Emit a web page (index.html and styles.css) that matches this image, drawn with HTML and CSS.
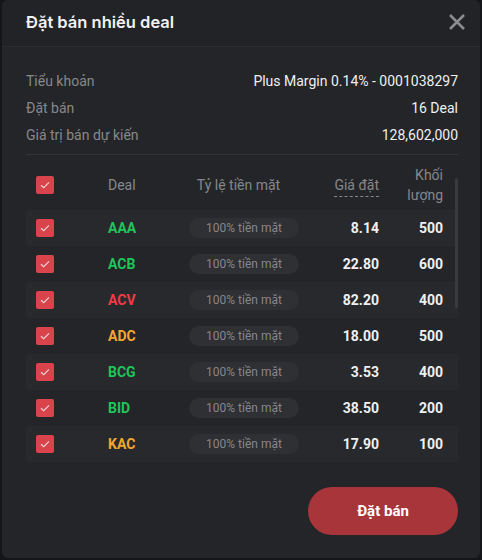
FILE: index.html
```html
<!DOCTYPE html>
<html lang="vi">
<head>
<meta charset="utf-8">
<link rel="stylesheet" href="styles.css">
</head>
<body>
<div class="modal">
  <div class="modal-header">
    <div class="title">Đặt bán nhiều deal</div>
    <svg class="close" width="18" height="18" viewBox="0 0 18 18"><path d="M2 2L16 16M16 2L2 16" stroke="#8b8c8f" stroke-width="2.6" stroke-linecap="butt"/></svg>
  </div>
  <div class="modal-body">
    <div class="info">
      <div class="info-row"><span class="label">Tiểu khoản</span><span class="value">Plus Margin 0.14% - 0001038297</span></div>
      <div class="info-row"><span class="label">Đặt bán</span><span class="value">16 Deal</span></div>
      <div class="info-row"><span class="label">Giá trị bán dự kiến</span><span class="value">128,602,000</span></div>
    </div>
    <div class="table">
      <div class="thead">
        <div class="cell c-check"><span class="cb"><svg width="10" height="8" viewBox="0 0 10 8"><path d="M1 4.2L3.7 6.6L9 1.4" fill="none" stroke="#f4d3d5" stroke-width="1.2"/></svg></span></div>
        <div class="cell c-deal">Deal</div>
        <div class="cell c-rate">Tỷ lệ tiền mặt</div>
        <div class="cell c-price"><span class="dashed">Giá đặt</span></div>
        <div class="cell c-vol">Khối<br>lượng</div>
        <div class="cell"></div>
      </div>
      <div class="tbody">
        <div class="row odd">
          <div class="cell c-check"><span class="cb"><svg width="10" height="8" viewBox="0 0 10 8"><path d="M1 4.2L3.7 6.6L9 1.4" fill="none" stroke="#f4d3d5" stroke-width="1.2"/></svg></span></div>
          <div class="cell c-deal green">AAA</div>
          <div class="cell c-rate"><span class="pill">100% tiền mặt</span></div>
          <div class="cell c-price num">8.14</div>
          <div class="cell c-vol num">500</div>
          <div class="cell"></div>
        </div>
        <div class="row">
          <div class="cell c-check"><span class="cb"><svg width="10" height="8" viewBox="0 0 10 8"><path d="M1 4.2L3.7 6.6L9 1.4" fill="none" stroke="#f4d3d5" stroke-width="1.2"/></svg></span></div>
          <div class="cell c-deal green">ACB</div>
          <div class="cell c-rate"><span class="pill">100% tiền mặt</span></div>
          <div class="cell c-price num">22.80</div>
          <div class="cell c-vol num">600</div>
          <div class="cell"></div>
        </div>
        <div class="row odd">
          <div class="cell c-check"><span class="cb"><svg width="10" height="8" viewBox="0 0 10 8"><path d="M1 4.2L3.7 6.6L9 1.4" fill="none" stroke="#f4d3d5" stroke-width="1.2"/></svg></span></div>
          <div class="cell c-deal red">ACV</div>
          <div class="cell c-rate"><span class="pill">100% tiền mặt</span></div>
          <div class="cell c-price num">82.20</div>
          <div class="cell c-vol num">400</div>
          <div class="cell"></div>
        </div>
        <div class="row">
          <div class="cell c-check"><span class="cb"><svg width="10" height="8" viewBox="0 0 10 8"><path d="M1 4.2L3.7 6.6L9 1.4" fill="none" stroke="#f4d3d5" stroke-width="1.2"/></svg></span></div>
          <div class="cell c-deal yellow">ADC</div>
          <div class="cell c-rate"><span class="pill">100% tiền mặt</span></div>
          <div class="cell c-price num">18.00</div>
          <div class="cell c-vol num">500</div>
          <div class="cell"></div>
        </div>
        <div class="row odd">
          <div class="cell c-check"><span class="cb"><svg width="10" height="8" viewBox="0 0 10 8"><path d="M1 4.2L3.7 6.6L9 1.4" fill="none" stroke="#f4d3d5" stroke-width="1.2"/></svg></span></div>
          <div class="cell c-deal green">BCG</div>
          <div class="cell c-rate"><span class="pill">100% tiền mặt</span></div>
          <div class="cell c-price num">3.53</div>
          <div class="cell c-vol num">400</div>
          <div class="cell"></div>
        </div>
        <div class="row">
          <div class="cell c-check"><span class="cb"><svg width="10" height="8" viewBox="0 0 10 8"><path d="M1 4.2L3.7 6.6L9 1.4" fill="none" stroke="#f4d3d5" stroke-width="1.2"/></svg></span></div>
          <div class="cell c-deal green">BID</div>
          <div class="cell c-rate"><span class="pill">100% tiền mặt</span></div>
          <div class="cell c-price num">38.50</div>
          <div class="cell c-vol num">200</div>
          <div class="cell"></div>
        </div>
        <div class="row odd">
          <div class="cell c-check"><span class="cb"><svg width="10" height="8" viewBox="0 0 10 8"><path d="M1 4.2L3.7 6.6L9 1.4" fill="none" stroke="#f4d3d5" stroke-width="1.2"/></svg></span></div>
          <div class="cell c-deal yellow">KAC</div>
          <div class="cell c-rate"><span class="pill">100% tiền mặt</span></div>
          <div class="cell c-price num">17.90</div>
          <div class="cell c-vol num">100</div>
          <div class="cell"></div>
        </div>
      </div>
      <div class="scrollbar"></div>
    </div>
    <div class="footer">
      <button class="btn">Đặt bán</button>
    </div>
  </div>
</div>
</body>
</html>
```

FILE: styles.css
```css
* { box-sizing: border-box; }
html, body { margin: 0; padding: 0; }
body {
  width: 482px;
  height: 560px;
  background: #15161a;
  font-family: Roboto, "Liberation Sans", sans-serif;
  overflow: hidden;
}
.modal {
  margin-left: 2px;
  width: 478px;
  height: 558px;
  background: #242528;
  border-radius: 6px;
  overflow: hidden;
  display: flex;
  flex-direction: column;
}
.modal-header {
  height: 47px;
  background: #222326;
  border-bottom: 1px solid #2b2c2f;
  display: flex;
  align-items: center;
  justify-content: space-between;
  padding: 0 14px 0 24px;
}
.title {
  font-family: Inter, "Noto Sans", sans-serif;
  font-weight: 600;
  font-size: 16.5px;
  color: #f2f2f4;
  margin-top: -2px;
}
.close { margin-top: -2px; }
.modal-body {
  flex: 1;
  padding: 20px 22px 0 24px;
  display: flex;
  flex-direction: column;
}
.info {
  border-bottom: 1px solid #333438;
  padding-bottom: 6px;
}
.info-row {
  height: 27px;
  display: flex;
  align-items: center;
  justify-content: space-between;
  font-size: 14px;
}
.label { color: #87888c; }
.value { color: #eeeff1; }
.table {
  position: relative;
  margin-top: 5px;
}
.thead, .row {
  display: grid;
  grid-template-columns: 82px 81px 110px 80px 64px 13px;
  align-items: center;
}
.thead {
  height: 50px;
  font-size: 14px;
  color: #86878b;
}
.thead .c-rate { padding-right: 11px; }
.row {
  height: 36px;
  font-size: 14px;
}
.row.odd { background: #28292c; }
.c-check { padding-left: 10px; display: flex; align-items: center; }
.cb {
  width: 18px;
  height: 18px;
  border-radius: 2px;
  background: #d9434b;
  display: flex;
  align-items: center;
  justify-content: center;
}
.c-rate { text-align: center; display: flex; justify-content: center; }
.c-price, .c-vol { text-align: right; }
.thead .c-vol { line-height: 20px; }
.dashed {
  border-bottom: 1px dashed #86878b;
  padding-bottom: 3px;
}
.pill {
  display: inline-block;
  width: 110px;
  height: 20px;
  line-height: 20px;
  border-radius: 10px;
  background: #2f3034;
  color: #86878b;
  font-size: 12px;
  text-align: center;
}
.num { color: #eef0f2; font-weight: 700; }
.row .c-deal { font-weight: 700; }
.green { color: #1fc45a; }
.red { color: #ef3b44; }
.yellow { color: #f2a532; }
.scrollbar {
  position: absolute;
  left: 429px;
  top: 18px;
  width: 3px;
  height: 130px;
  background: #3a3b3e;
  border-radius: 2px;
}
.footer {
  display: flex;
  justify-content: flex-end;
  padding-top: 25px;
}
.btn {
  width: 150px;
  height: 48px;
  border: none;
  border-radius: 24px;
  background: #a8353a;
  color: #ffffff;
  font-family: Roboto, "Liberation Sans", sans-serif;
  font-weight: 700;
  font-size: 15px;
}
```
